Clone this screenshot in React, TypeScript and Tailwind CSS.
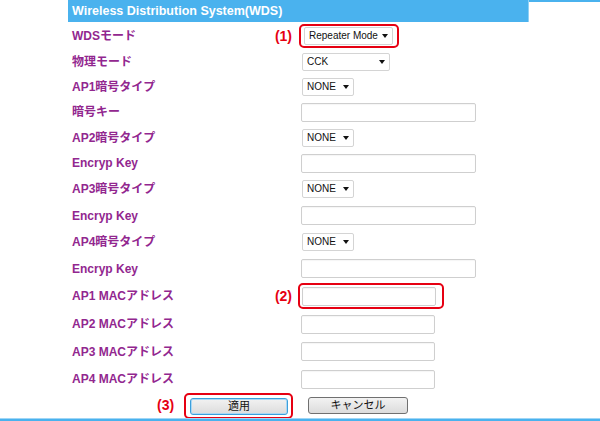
import React from "react";

const font = "font-['Liberation_Sans','Noto_Sans_CJK_JP',sans-serif]";

function Tri() {
  return (
    <svg width="6" height="4" viewBox="0 0 6 4" className="shrink-0">
      <polygon points="0,0 6,0 3,4" fill="#111" />
    </svg>
  );
}

function Select({ text, w }: { text: string; w: string }) {
  return (
    <div
      className={`${w} h-[18px] flex items-center justify-between pl-[4px] pr-[4px] border border-[#d4d4d4] rounded-[2px] bg-white text-[10px] leading-none text-[#111] whitespace-nowrap`}
    >
      <span>{text}</span>
      <Tri />
    </div>
  );
}

function Input({ w }: { w: string }) {
  return <div className={`${w} h-[19px] border border-[#cfcfcf] rounded-[2px] bg-white shadow-[inset_0_1px_1px_rgba(0,0,0,0.04)]`} />;
}

function Row({
  h,
  label,
  marker,
  children,
}: {
  h: string;
  label: string;
  marker?: string;
  children: React.ReactNode;
}) {
  return (
    <div className={`${h} flex items-center shrink-0`}>
      <div className="ml-[72px] w-[200px] text-[12px] font-bold text-[#92278f] whitespace-nowrap">{label}</div>
      <div className="w-[25px] pr-[5px] text-right text-[14px] font-bold text-[#e60012] whitespace-nowrap">{marker}</div>
      {children}
    </div>
  );
}

export default function App() {
  return (
    <div className={`w-[600px] h-[421px] bg-white flex flex-col overflow-hidden ${font}`}>
      <div className="h-[22px] flex shrink-0">
        <div className="w-[68px]" />
        <div className="w-[461px] bg-[#4ab2ee] border-r border-[#8fd0f5] text-white font-bold text-[12.5px] pl-[4px] flex items-center">
          Wireless Distribution System(WDS)
        </div>
        <div className="flex-1 border-t-2 border-[#4ab2ee]" />
      </div>
      <div className="h-[1px] shrink-0" />

      <Row h="h-[26px]" label="WDSモード" marker="(1)">
        <div className="ml-[2px] border-2 border-[#e60012] rounded-[5px] pl-[3px] pr-[4px] py-[1px]">
          <Select text="Repeater Mode" w="w-[89px]" />
        </div>
      </Row>
      <Row h="h-[25px]" label="物理モード">
        <div className="ml-[5px]">
          <Select text="CCK" w="w-[88px]" />
        </div>
      </Row>
      <Row h="h-[25px]" label="AP1暗号タイプ">
        <div className="ml-[5px]">
          <Select text="NONE" w="w-[52px]" />
        </div>
      </Row>
      <Row h="h-[26px]" label="暗号キー">
        <div className="ml-[4px]">
          <Input w="w-[175px]" />
        </div>
      </Row>
      <Row h="h-[25px]" label="AP2暗号タイプ">
        <div className="ml-[5px]">
          <Select text="NONE" w="w-[52px]" />
        </div>
      </Row>
      <Row h="h-[26px]" label="Encryp Key">
        <div className="ml-[4px]">
          <Input w="w-[175px]" />
        </div>
      </Row>
      <Row h="h-[26px]" label="AP3暗号タイプ">
        <div className="ml-[5px]">
          <Select text="NONE" w="w-[52px]" />
        </div>
      </Row>
      <Row h="h-[27px]" label="Encryp Key">
        <div className="ml-[4px]">
          <Input w="w-[175px]" />
        </div>
      </Row>
      <Row h="h-[26px]" label="AP4暗号タイプ">
        <div className="ml-[5px]">
          <Select text="NONE" w="w-[52px]" />
        </div>
      </Row>
      <Row h="h-[27px]" label="Encryp Key">
        <div className="ml-[4px]">
          <Input w="w-[175px]" />
        </div>
      </Row>
      <Row h="h-[28px]" label="AP1 MACアドレス" marker="(2)">
        <div className="ml-[1px] border-2 border-[#e60012] rounded-[5px] pl-[2px] pr-[6px] pt-[2px] pb-[1px]">
          <Input w="w-[134px]" />
        </div>
      </Row>
      <Row h="h-[28px]" label="AP2 MACアドレス">
        <div className="ml-[4px]">
          <Input w="w-[134px]" />
        </div>
      </Row>
      <Row h="h-[27px]" label="AP3 MACアドレス">
        <div className="ml-[4px]">
          <Input w="w-[134px]" />
        </div>
      </Row>
      <Row h="h-[28px]" label="AP4 MACアドレス">
        <div className="ml-[4px]">
          <Input w="w-[134px]" />
        </div>
      </Row>

      <div className="h-[25px] flex items-center shrink-0">
        <div className="ml-[157px] w-[27px] text-[14px] font-bold text-[#e60012] whitespace-nowrap">(3)</div>
        <div className="border-2 border-[#e60012] rounded-[5px] pl-[4px] pr-[3px] pt-[3px] pb-[2px]">
          <div className="w-[98px] h-[17px] flex items-center justify-center rounded-[3px] border border-[#3c9fdb] bg-[linear-gradient(#f2f2f2,#dcdcdc)] text-[11px] text-[#111] shadow-[inset_0_0_0_1px_#a9d8f5]">
            適用
          </div>
        </div>
        <div className="ml-[15px] w-[100px] h-[17px] flex items-center justify-center rounded-[3px] border border-[#707070] bg-[linear-gradient(#f2f2f2,#dcdcdc)] text-[11px] text-[#111]">
          キャンセル
        </div>
      </div>
      <div className="flex-1" />
      <div className="h-[1px] bg-[#9fd6f6] shrink-0" />
      <div className="h-[2px] bg-[#4ab2ee] shrink-0" />
    </div>
  );
}
